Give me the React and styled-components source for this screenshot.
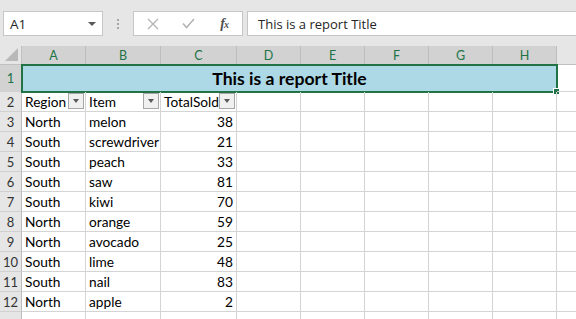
import React from 'react';
import styled, { createGlobalStyle } from 'styled-components';

const GlobalStyle = createGlobalStyle`
  html, body {
    margin: 0;
    padding: 0;
    background: #ffffff;
  }
  body {
    overflow: hidden;
  }
`;

const COLUMNS = ['A', 'B', 'C', 'D', 'E', 'F', 'G', 'H', 'I'];
const WIDTHS = [64, 75, 76, 64, 64, 64, 64, 64, 64];
const GREEN = '#217346';

const rows = [
  ['North', 'melon', 38],
  ['South', 'screwdriver', 21],
  ['South', 'peach', 33],
  ['South', 'saw', 81],
  ['South', 'kiwi', 70],
  ['North', 'orange', 59],
  ['North', 'avocado', 25],
  ['South', 'lime', 48],
  ['South', 'nail', 83],
  ['North', 'apple', 2],
];

const Window = styled.div`
  width: 576px;
  height: 319px;
  overflow: hidden;
  display: flex;
  flex-direction: column;
  background: #ffffff;
`;

const FormulaBar = styled.div`
  height: 46px;
  flex: none;
  box-sizing: border-box;
  background: #e6e6e6;
  display: flex;
  align-items: flex-start;
  padding: 11px 0 0 3px;
  font-family: "Open Sans", "Noto Sans", sans-serif;
  font-size: 13px;
  color: #262626;
`;

const Box = styled.div`
  height: 25px;
  box-sizing: border-box;
  background: #ffffff;
  border: 1px solid #c6c6c6;
  display: flex;
  align-items: center;
`;

const NameBox = styled(Box)`
  width: 100px;
  padding: 0 6px 0 6px;
  justify-content: space-between;
  font-size: 13.5px;
`;

const Caret = styled.span`
  width: 0;
  height: 0;
  border-left: 4px solid transparent;
  border-right: 4px solid transparent;
  border-top: 4px solid #595959;
`;

const Grip = styled.div`
  width: 30px;
  height: 25px;
  display: flex;
  flex-direction: column;
  align-items: center;
  justify-content: center;
  gap: 2px;
`;

const Dot = styled.span`
  width: 2px;
  height: 2px;
  background: #a6a6a6;
`;

const ButtonGroup = styled(Box)`
  width: 110px;
  padding-left: 1px;
`;

const BarButton = styled.span`
  width: 36px;
  height: 23px;
  display: flex;
  align-items: center;
  justify-content: center;
  color: ${p => (p.$active ? '#505050' : '#b4b4b4')};
`;

const Fx = styled.span`
  font-family: "Liberation Serif", serif;
  font-style: italic;
  font-weight: bold;
  font-size: 14px;
  color: #505050;
  letter-spacing: -1px;
  & small {
    font-size: 10px;
  }
`;

const FormulaInput = styled(Box)`
  flex: 1;
  margin-left: 4px;
  padding-left: 10px;
  border-right: none;
  white-space: nowrap;
`;

const Sheet = styled.div`
  display: grid;
  grid-template-columns: 22px ${WIDTHS.map(w => w + 'px').join(' ')};
  grid-template-rows: 19px 27px repeat(11, 20px);
  font-family: "Lato", "Liberation Sans", sans-serif;
  font-size: 13.7px;
  color: #000000;
`;

const Corner = styled.div`
  background: #e6e6e6;
  border-right: 1px solid #c0c0c0;
  border-bottom: 1px solid #c0c0c0;
  box-sizing: border-box;
  position: relative;
  &::after {
    content: '';
    position: absolute;
    right: 3px;
    bottom: 3px;
    width: 0;
    height: 0;
    border-left: 13px solid transparent;
    border-bottom: 13px solid #b9b9b9;
  }
`;

const ColHeader = styled.div`
  box-sizing: border-box;
  background: ${p => (p.$selected ? '#d2d2d2' : '#e6e6e6')};
  color: ${p => (p.$selected ? GREEN : '#444444')};
  border-right: 1px solid #bdbdbd;
  border-bottom: 1px solid ${p => (p.$selected ? GREEN : '#c0c0c0')};
  display: flex;
  align-items: center;
  justify-content: center;
  font-size: 12.5px;
`;

const RowHeader = styled.div`
  box-sizing: border-box;
  background: ${p => (p.$selected ? '#d2d2d2' : '#e6e6e6')};
  color: ${p => (p.$selected ? GREEN : '#333333')};
  border-right: 1px solid ${p => (p.$selected ? GREEN : '#bdbdbd')};
  border-bottom: 1px solid #d0d0d0;
  display: flex;
  align-items: ${p => (p.$last ? 'flex-start' : 'center')};
  padding-top: ${p => (p.$last ? '6px' : '0')};
  justify-content: center;
  font-size: 13px;
  overflow: hidden;
`;

const Cell = styled.div`
  box-sizing: border-box;
  border-right: 1px solid #d4d4d4;
  border-bottom: 1px solid #d4d4d4;
  padding: 0 3px;
  display: flex;
  align-items: center;
  justify-content: ${p => (p.$number ? 'flex-end' : 'flex-start')};
  white-space: nowrap;
  overflow: hidden;
  position: relative;
`;

const TitleCell = styled.div`
  grid-column: 2 / span 8;
  position: relative;
  background: #add8e6;
  display: flex;
  align-items: center;
  justify-content: center;
  font-weight: bold;
  font-size: 17.6px;
`;

const Selection = styled.div`
  position: absolute;
  left: -1px;
  top: -1px;
  right: -1px;
  bottom: -1px;
  border: 2px solid ${GREEN};
  pointer-events: none;
`;

const Handle = styled.div`
  position: absolute;
  right: -4px;
  bottom: -4px;
  width: 5px;
  height: 5px;
  background: ${GREEN};
  border: 1px solid #ffffff;
`;

const FilterButton = styled.span`
  position: absolute;
  right: 1px;
  top: 1px;
  width: 16px;
  height: 16px;
  box-sizing: border-box;
  background: #f0f0f0;
  border: 1px solid #a6a6a6;
  display: flex;
  align-items: center;
  justify-content: center;
  &::before {
    content: '';
    width: 0;
    height: 0;
    border-left: 3.5px solid transparent;
    border-right: 3.5px solid transparent;
    border-top: 4px solid #595959;
  }
`;

const CloseIcon = () => (
  <svg width="12" height="12" viewBox="0 0 12 12" fill="none" stroke="currentColor" strokeWidth="1.3">
    <path d="M1 1 L11 11 M11 1 L1 11" />
  </svg>
);

const CheckIcon = () => (
  <svg width="13" height="11" viewBox="0 0 13 11" fill="none" stroke="currentColor" strokeWidth="1.6">
    <path d="M1 5.5 L4.5 9.5 L12 1" />
  </svg>
);

const HeaderCell = ({ children }) => (
  <Cell>
    {children}
    <FilterButton />
  </Cell>
);

export default function App() {
  const emptyCols = COLUMNS.slice(3);
  return (
    <Window>
      <GlobalStyle />
      <FormulaBar>
        <NameBox>
          <span>A1</span>
          <Caret />
        </NameBox>
        <Grip>
          <Dot />
          <Dot />
          <Dot />
        </Grip>
        <ButtonGroup>
          <BarButton><CloseIcon /></BarButton>
          <BarButton><CheckIcon /></BarButton>
          <BarButton $active><Fx>f<small>x</small></Fx></BarButton>
        </ButtonGroup>
        <FormulaInput>This is a report Title</FormulaInput>
      </FormulaBar>

      <Sheet>
        <Corner />
        {COLUMNS.map(c => (
          <ColHeader key={c} $selected={c !== 'I'}>{c !== 'I' ? c : ''}</ColHeader>
        ))}

        <RowHeader $selected>1</RowHeader>
        <TitleCell>
          This is a report Title
          <Selection>
            <Handle />
          </Selection>
        </TitleCell>
        <Cell />

        <RowHeader>2</RowHeader>
        <HeaderCell>Region</HeaderCell>
        <HeaderCell>Item</HeaderCell>
        <HeaderCell>TotalSold</HeaderCell>
        {emptyCols.map(c => <Cell key={c} />)}

        {rows.map(([region, item, total], i) => (
          <React.Fragment key={i}>
            <RowHeader>{i + 3}</RowHeader>
            <Cell>{region}</Cell>
            <Cell>{item}</Cell>
            <Cell $number>{total}</Cell>
            {emptyCols.map(c => <Cell key={c} />)}
          </React.Fragment>
        ))}

        <RowHeader $last>13</RowHeader>
        {COLUMNS.map(c => <Cell key={c} />)}
      </Sheet>
    </Window>
  );
}
